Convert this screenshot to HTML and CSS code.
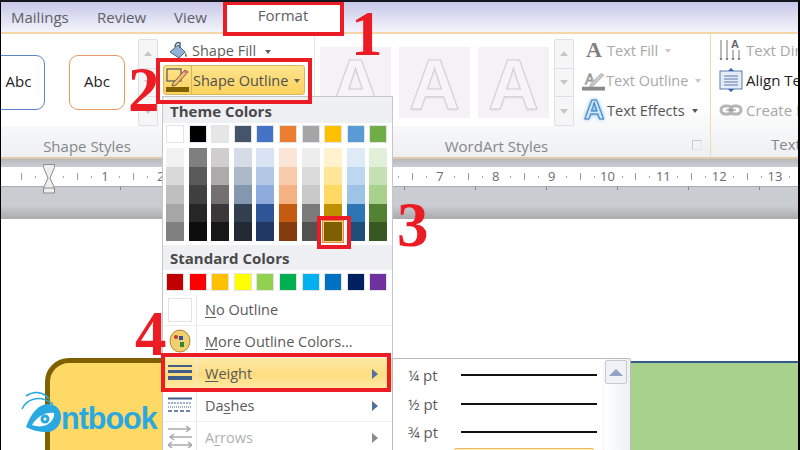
FILE: index.html
```html
<!DOCTYPE html>
<html lang="en">
<head>
    <meta charset="UTF-8">
    <title>Shape Outline</title>
    <link rel="stylesheet" href="styles.css">
</head>
<body>
<div class="screen">
    <!-- Tabs -->
    <div class="tabs">
        <span class="tab mailings">Mailings</span>
        <span class="tab review">Review</span>
        <span class="tab view">View</span>
        <span class="tab format">Format</span>
    </div>

    <!-- Ribbon -->
    <div class="ribbon">
        <div class="group shape-styles">
            <div class="group-body">
                <div class="gallery">
                    <div class="abc-box blue">Abc</div>
                    <div class="abc-box orange">Abc</div>
                </div>
                <div class="scroller">
                    <span class="up"></span><span class="down"></span><span class="more"></span>
                </div>
            </div>
            <div class="group-label">Shape Styles</div>
        </div>

        <div class="group commands">
            <div class="cmd shape-fill">
                <svg width="22" height="20" viewBox="0 0 22 20"><path d="M3 11 11 4l7 7-6 6z" fill="#8fb2d8" stroke="#48627f"/><path d="M8 6C8 2 11 1 13 2v5" fill="none" stroke="#48627f" stroke-width="1.5"/><path d="M18 11c1 2 2 3 2 4s-2 1-2 0z" fill="#6a8a3c"/><rect x="0" y="17" width="20" height="2" fill="#a9cf8e"/></svg>
                <span>Shape Fill</span><i class="caret"></i>
            </div>
            <div class="cmd shape-outline">
                <span class="pen-icon">
                    <svg width="26" height="26" viewBox="0 0 26 26"><rect x="3" y="3" width="14" height="12" fill="none" stroke="#555" stroke-width="1.2"/><path d="M9 17 21 4l3 2L12 19l-4 1z" fill="#f1c07c" stroke="#7a5a30" stroke-width="1"/><path d="M21 4l3 2-1.500 2-3-2z" fill="#e0707a"/><rect x="2" y="21" width="23" height="5" fill="#7f6000"/></svg>
                </span>
                <span>Shape Outline</span><i class="caret"></i>
            </div>
        </div>

        <div class="group wordart">
            <div class="group-body">
                <div class="art-gallery">
                    <div class="art">A</div>
                    <div class="art">A</div>
                    <div class="art">A</div>
                </div>
                <div class="scroller">
                    <span class="up"></span><span class="down"></span><span class="more"></span>
                </div>
                <div class="text-cmds">
                    <div class="cmd faded"><b class="plain-a">A</b><span>Text Fill</span><i class="caret"></i></div>
                    <div class="cmd faded">
                        <svg width="23" height="24" viewBox="0 0 24 24"><text x="3" y="16" font-family="Liberation Sans" font-size="15" fill="none" stroke="#888" stroke-width=".8">A</text><path d="M9 16 20 5l3 2-11 11-4 1z" fill="#c9c9c9" stroke="#999" stroke-width=".6"/><rect x="0" y="19" width="24" height="4" fill="#8a8a8a"/></svg>
                        <span>Text Outline</span><i class="caret"></i>
                    </div>
                    <div class="cmd dark"><b class="glow-a">A</b><span>Text Effects</span><i class="caret"></i></div>
                </div>
            </div>
            <div class="group-label wordart-label">WordArt Styles<span class="launcher"></span></div>
        </div>

        <div class="group text-group">
            <div class="cmd faded">
                <svg width="24" height="24" viewBox="0 0 24 24" fill="none" stroke="#777"><path d="M2 2v20M8 2v20M14 12v10M20 12v10"/><path d="M1 20l1 2 1-2M7 20l1 2 1-2M13 20l1 2 1-2M19 20l1 2 1-2" /><text x="12" y="10" font-family="Liberation Sans" font-weight="bold" font-size="11" fill="#666" stroke="none">A</text></svg>
                <span>Text Direction</span>
            </div>
            <div class="cmd black">
                <svg width="24" height="24" viewBox="0 0 24 24"><rect x="1" y="3" width="22" height="18" fill="#e4ecf7" stroke="#5a7aa8"/><path d="M5 8h14M5 11h14M5 14h14M5 17h14" stroke="#5a7aa8"/><path d="M12 0l3 3H9zM12 24l3-3H9z" fill="#2f5fb0"/></svg>
                <span>Align Text</span>
            </div>
            <div class="cmd faded">
                <svg width="24" height="24" viewBox="0 0 24 24" fill="none"><rect x="2" y="8" width="11" height="8" rx="4" stroke="#b5b5b5" stroke-width="3"/><rect x="11" y="8" width="11" height="8" rx="4" stroke="#b5b5b5" stroke-width="3"/><path d="M7 12h10" stroke="#8a8a8a"/></svg>
                <span>Create Link</span>
            </div>
            <div class="group-label text-label">Text</div>
        </div>
    </div>

    <!-- Ruler -->
    <div class="ruler-band">
        <div class="ruler" id="ruler">
            <svg class="marker" width="12" height="30" viewBox="0 0 12 30"><path d="M.5.5h11v3L7 14l4.500 10v5H.5v-5L5 14 .5 3.500z" fill="#eee" stroke="#8c8c8c"/><path d="M.5 24h11" stroke="#8c8c8c"/></svg>
        </div>
    </div>

    <!-- Documento -->
    <div class="doc"></div>
    <div class="yellow-shape"></div>
    <div class="green-shape"></div>

    <!-- Logo -->
    <div class="logo">
        <svg class="logo-eye" width="44" height="46" viewBox="0 0 44 46"><path d="M3 20C8 10 20 5 34 15" fill="none" stroke="#29a9e0" stroke-width="1.6"/><path d="M7 7C14 2 24 2 30 10" fill="none" stroke="#29a9e0" stroke-width="1.6"/><path d="M7 38C12 24 20 15 29 15c9 0 13 7 13 13 0 8-6 15-14 15-8 0-16-2-21-5z" fill="#29a9e0"/><path d="M13 36c5-8 13-13 22-12 1 6-5 12-11 13-4 1-8 0-11-1z" fill="#fff"/><circle cx="26" cy="30" r="4.5" fill="#29a9e0"/><circle cx="26" cy="30" r="1.5" fill="#fff"/></svg>
        <span class="logo-text">ntbook</span>
    </div>

    <!-- Menu de cores -->
    <div class="menu">
        <div class="menu-head">Theme Colors</div>
        <div class="swatch-row base">
            <i style="background: #ffffff"></i><i style="background: #000000"></i><i style="background: #e7e6e6"></i><i style="background: #44546a"></i><i style="background: #4472c4"></i><i style="background: #ed7d31"></i><i style="background: #a5a5a5"></i><i style="background: #ffc000"></i><i style="background: #5b9bd5"></i><i style="background: #70ad47"></i>
        </div>
        <div class="shades" id="shades"></div>
        <div class="menu-head standard">Standard Colors</div>
        <div class="swatch-row">
            <i style="background: #c00000"></i><i style="background: #ff0000"></i><i style="background: #ffc000"></i><i style="background: #ffff00"></i><i style="background: #92d050"></i><i style="background: #00b050"></i><i style="background: #00b0f0"></i><i style="background: #0070c0"></i><i style="background: #002060"></i><i style="background: #7030a0"></i>
        </div>
        <div class="menu-list">
            <div class="menu-item no-outline"><span class="ic"><span class="white-box"></span></span><span class="lb"><u>N</u>o Outline</span></div>
            <div class="menu-item more-colors">
                <span class="ic"><svg width="22" height="24" viewBox="0 0 22 24"><ellipse cx="11" cy="12" rx="10" ry="11" fill="#f0cf70" stroke="#b08a30"/><circle cx="7" cy="8" r="2" fill="#d03020"/><rect x="10" y="7" width="4" height="4" fill="#2a4fa0"/><rect x="11" y="13" width="4" height="5" fill="#2f8a30"/></svg></span>
                <span class="lb"><u>M</u>ore Outline Colors...</span>
            </div>
            <div class="menu-item weight">
                <span class="ic"><svg width="24" height="16" viewBox="0 0 24 16"><rect y="0" width="24" height="2" fill="#3f5f8a"/><rect y="5" width="24" height="3" fill="#3f5f8a"/><rect y="11" width="24" height="4" fill="#3f5f8a"/></svg></span>
                <span class="lb"><u>W</u>eight</span><i class="arrow"></i>
            </div>
            <div class="menu-item">
                <span class="ic"><svg width="24" height="16" viewBox="0 0 24 16" fill="none" stroke="#3f5f8a"><path d="M0 1.500h24" stroke-width="2"/><path d="M0 6h24" stroke-dasharray="2 1"/><path d="M0 10h24" stroke-dasharray="1 1"/><path d="M0 14h24" stroke-dasharray="4 2" stroke-width="1.500"/></svg></span>
                <span class="lb">Da<u>s</u>hes</span><i class="arrow"></i>
            </div>
            <div class="menu-item disabled">
                <span class="ic"><svg width="24" height="22" viewBox="0 0 24 22" fill="none" stroke="#aaa" stroke-width="1.500"><path d="M0 3h22M18 0l4 3-4 3"/><path d="M24 11H2M6 8l-4 3 4 3"/><path d="M0 19h24M4 16l-4 3 4 3M20 16l4 3-4 3"/></svg></span>
                <span class="lb">A<u>r</u>rows</span><i class="arrow"></i>
            </div>
        </div>
    </div>

    <!-- Submenu Weight -->
    <div class="submenu">
        <div class="weights">
            <div class="weight-row"><span>¼ pt</span><i class="w1"></i></div>
            <div class="weight-row"><span>½ pt</span><i class="w1"></i></div>
            <div class="weight-row"><span>¾ pt</span><i class="w2"></i></div>
            <div class="weight-next"></div>
        </div>
        <div class="sub-scroll"><span class="sub-up"></span></div>
    </div>

    <!-- Marcações em vermelho -->
    <div class="mark mark-format"></div>
    <div class="mark mark-outline"></div>
    <div class="mark mark-swatch"></div>
    <div class="mark mark-weight"></div>
    <span class="step step1">1</span>
    <span class="step step2">2</span>
    <span class="step step3">3</span>
    <span class="step step4">4</span>
</div>
<script>
    // Colunas de tons do Theme Colors
    const columns = [
        ['#f2f2f2', '#d9d9d9', '#bfbfbf', '#a6a6a6', '#808080'],
        ['#7f7f7f', '#595959', '#404040', '#262626', '#0d0d0d'],
        ['#d0cece', '#aeabab', '#757070', '#3a3838', '#171717'],
        ['#d6dce5', '#adb9ca', '#8497b0', '#323f4f', '#222a35'],
        ['#dae3f3', '#b4c7e7', '#8faadc', '#2f5597', '#1f3864'],
        ['#fbe5d6', '#f8cbad', '#f4b183', '#c55a11', '#843c0c'],
        ['#ededed', '#dbdbdb', '#c9c9c9', '#7b7b7b', '#525252'],
        ['#fff2cc', '#ffe699', '#ffd966', '#bf9000', '#7f6000'],
        ['#deebf7', '#bdd7ee', '#9dc3e6', '#2e75b6', '#1f4e79'],
        ['#e2f0d9', '#c5e0b4', '#a9d18e', '#548235', '#385723']
    ];
    const shades = document.getElementById('shades');
    columns.forEach(function(col, c) {
        const column = document.createElement('div');
        column.className = 'shade-col';
        col.forEach(function(color, r) {
            const cell = document.createElement('i');
            cell.style.background = color;
            if (c === 7 && r === 4) cell.className = 'selected'; // cor escolhida
            column.appendChild(cell);
        });
        shades.appendChild(column);
    });

    // Régua: números, traços e pontos
    const ruler = document.getElementById('ruler');
    function addMark(className, x, text) {
        const mark = document.createElement('span');
        mark.className = className;
        mark.style.left = x + 'px';
        if (text) mark.textContent = text;
        ruler.appendChild(mark);
    }
    for (let n = 0; n <= 14; n++) {
        const x = 48 + n * 55.85;
        if (n > 0) addMark('num', x, String(n));
        addMark('tick', x - 28);
        addMark('dot', x - 14);
        addMark('dot', x + 14);
    }
    for (let i = 0; i < 11; i++) {
        addMark('low-tick', 48 + i * 71);
    }
</script>
</body>
</html>
```

FILE: styles.css
```css
body {
    margin: 0;
    background: #000;
    font-family: "Open Sans", "Liberation Sans", sans-serif;
    color: #5f5f5f;
}
.screen {
    position: relative;
    width: 800px;
    height: 450px;
    overflow: hidden;
    background: #fff;
    box-sizing: border-box;
    border-top: 2px solid #15151f;
    border-left: 1px solid #000;
    border-right: 2px solid #000;
}

/* Tabs */
.tabs {
    display: flex;
    align-items: center;
    height: 30px;
    padding-left: 10px;
    box-sizing: border-box;
    background: linear-gradient(#c6c8e8, #f4f4fb);
    font-size: 15px;
    color: #5d6066;
}
.tab { display: block; }
.mailings { width: 86px; }
.review { width: 77px; }
.view { width: 49px; }
.format {
    width: 120px;
    height: 34px;
    line-height: 30px;
    text-align: center;
    background: #fff;
}

/* Ribbon */
.ribbon {
    display: flex;
    height: 127px;
    box-sizing: border-box;
    border-top: 2px solid #f5d6a8;
    border-bottom: 2px solid #dfc9a8;
    background: linear-gradient(#fff 55%, #eeeff1);
}
.group { position: relative; flex-shrink: 0; }
.group-body { display: flex; height: 88px; padding-top: 5px; }
.group-label {
    height: 24px;
    line-height: 24px;
    margin-top: 7px;
    text-align: center;
    font-size: 15px;
    color: #84878c;
}
.shape-styles { width: 158px; }
.shape-styles .group-label { padding-left: 14px; }
.gallery {
    display: flex;
    gap: 24px;
    align-items: center;
    width: 137px;
    height: 87px;
    flex-shrink: 0;
    background: #fff;
}
.abc-box {
    height: 55px;
    line-height: 51px;
    flex-shrink: 0;
    box-sizing: border-box;
    border-radius: 9px;
    text-align: center;
    font-size: 15px;
    color: #222;
    background: #fff;
}
.abc-box.blue { border: 1px solid #5b86c8; width: 62px; margin-left: -18px; padding-left: 9px; }
.abc-box.orange { border: 1px solid #e59a63; width: 56px; }
.scroller {
    display: flex;
    flex-direction: column;
    flex-shrink: 0;
    width: 20px;
    height: 87px;
    box-sizing: border-box;
    border: 1px solid #dfe0e3;
    border-radius: 2px;
    background: #f6f6f7;
}
.scroller span {
    flex: 1;
    display: flex;
    align-items: center;
    justify-content: center;
    border-bottom: 1px solid #dfe0e3;
}
.scroller span:last-child { border-bottom: 0; }
.scroller span::before {
    content: "";
    border-left: 4px solid transparent;
    border-right: 4px solid transparent;
}
.scroller .up::before { border-bottom: 5px solid #c4c6ca; }
.scroller .down::before, .scroller .more::before { border-top: 5px solid #c4c6ca; }

/* Comandos */
.cmd {
    display: flex;
    align-items: center;
    height: 30px;
    gap: 3px;
    font-size: 14.5px;
    white-space: nowrap;
}
.cmd svg { flex-shrink: 0; }
.caret {
    display: block;
    width: 0;
    margin: 2px 0 0 6px;
    border-left: 3.5px solid transparent;
    border-right: 3.5px solid transparent;
    border-top: 4px solid #5f5f5f;
}
.commands {
    width: 156px;
    padding: 2px 0 0 5px;
    box-sizing: border-box;
    border-right: 1px solid #e6e6e6;
}
.shape-fill { height: 29px; padding-left: 3px; }
.shape-outline {
    width: 142px;
    height: 30px;
    margin-left: -1px;
    gap: 0;
    box-sizing: border-box;
    border: 1px solid #d9b75f;
    border-radius: 3px;
    background: linear-gradient(#fde48d, #fdd25e);
    color: #4f4f4f;
}
.pen-icon {
    display: flex;
    width: 27px;
    height: 28px;
    margin-right: 1px;
    border-right: 1px solid #d9b75f;
}
.wordart { width: 395px; }
.art-gallery {
    display: flex;
    gap: 8px;
    flex-shrink: 0;
    width: 239px;
    height: 87px;
    box-sizing: border-box;
    padding: 8px 5px;
    background: #fff;
}
.art {
    width: 71px;
    height: 71px;
    text-align: center;
    font: bold 70px/76px "Liberation Sans", sans-serif;
    color: #f7f3f8;
    background: #f5f1f6;
    -webkit-text-stroke: 1px #cfcfcf;
    text-shadow: 0 1px 2px #d8d8d8;
    filter: blur(0.5px);
}
.text-cmds { margin-top: -4px; padding-left: 8px; color: #a8a8a8; }
.text-cmds .cmd { gap: 1px; }
.faded { color: #a8a8a8; }
.faded .caret { border-top-color: #c8c8c8; }
.dark { color: #555; }
.dark .caret { border-top-color: #555; }
.black { color: #222; }
.plain-a, .glow-a {
    display: block;
    width: 24px;
    text-align: center;
    font: bold 22px "Liberation Serif", serif;
    color: #808080;
}
.glow-a {
    font: bold 28px "Liberation Sans", sans-serif;
    color: #cfe8f8;
    text-shadow: 0 0 4px #43a6e8;
    -webkit-text-stroke: 1px #3a7ec0;
}
.wordart-label { position: relative; padding-right: 32px; }
.launcher {
    position: absolute;
    right: 8px;
    top: 6px;
    width: 8px;
    height: 8px;
    border-top: 1px solid #c8c8c8;
    border-left: 1px solid #c8c8c8;
    border-right: 1px solid #e4e4e4;
    border-bottom: 1px solid #e4e4e4;
}
.text-group {
    flex: 1;
    min-width: 0;
    padding: 1px 0 0 8px;
    border-left: 1px solid #f0d9b5;
    overflow: hidden;
}
.text-group .cmd { gap: 3px; font-size: 15px; }
.text-label {
    position: absolute;
    left: 60px;
    bottom: 1px;
    margin: 0;
}

/* Régua */
.ruler-band {
    position: relative;
    height: 60px;
    padding-top: 8px;
    box-sizing: border-box;
    background: linear-gradient(#b6b8bc, #c9ccd0 12%, #c9ccd0 78%, #a9aaac);
}
.ruler {
    position: relative;
    height: 19px;
    background: #fff;
    border-bottom: 1px solid #a9acb0;
    font-size: 13px;
    color: #6d6d6d;
}
.num { position: absolute; top: 0; transform: translateX(-50%); line-height: 19px; }
.tick {
    position: absolute;
    top: 6px;
    width: 1px;
    height: 7px;
    background: #9a9a9a;
}
.dot {
    position: absolute;
    top: 9px;
    width: 1px;
    height: 2px;
    background: #a8a8a8;
}
.low-tick {
    position: absolute;
    top: 20px;
    width: 1px;
    height: 3px;
    background: #85888c;
}
.marker { position: absolute; left: 42px; top: -3px; z-index: 1; }

/* Documento */
.doc { height: 231px; background: #fff; }
.yellow-shape {
    position: absolute;
    left: 44px;
    top: 356px;
    width: 160px;
    height: 120px;
    box-sizing: border-box;
    border: 5px solid #7f6000;
    border-radius: 24px;
    background: #ffd966;
}
.green-shape {
    position: absolute;
    left: 629px;
    top: 359px;
    width: 180px;
    height: 100px;
    background: #a9d18e;
    border-top: 2px solid #2f5a8a;
}
.logo {
    position: absolute;
    left: 18px;
    top: 385px;
    display: flex;
    align-items: center;
}
.logo-eye { margin-right: -2px; }
.logo-text {
    font: bold 30.5px "Liberation Sans", sans-serif;
    letter-spacing: -1px;
    color: #29a9e0;
    margin-top: 12px;
    line-height: 38px;
}

/* Menu */
.menu {
    position: absolute;
    left: 161px;
    top: 94px;
    width: 231px;
    height: 360px;
    box-sizing: border-box;
    border: 1px solid #c4c6ca;
    background: #fff;
    font-size: 14.5px;
}
.menu-head {
    height: 26px;
    line-height: 28px;
    padding-left: 7px;
    background: #eef0f4;
    font-weight: bold;
    font-size: 15px;
    color: #4a4a4a;
}
.menu-head.standard { height: 25px; margin-top: 4px; line-height: 26px; }
.swatch-row {
    display: flex;
    gap: 4.6px;
    padding: 3px 3px 0;
    height: 20px;
}
.swatch-row i {
    display: block;
    width: 18px;
    height: 18px;
    box-sizing: border-box;
    border: 1px solid #e3e4e7;
}
.swatch-row.base { height: 21px; padding-top: 2px; }
.shades {
    display: flex;
    gap: 4.6px;
    padding: 0 3px;
    margin-top: 2px;
}
.shade-col { display: flex; flex-direction: column; }
.shade-col i { display: block; width: 18px; height: 18.6px; }
.shade-col i.selected { box-shadow: 0 0 0 1px #f8cb7e, 0 0 0 2px #e8883a; position: relative; }
.menu-list { margin-top: 2px; }
.menu-item {
    position: relative;
    display: flex;
    align-items: center;
    height: 32px;
    border-bottom: 1px solid #eee;
    box-sizing: border-box;
    color: #5a5a5a;
}
.no-outline { height: 31px; }
.ic {
    display: flex;
    align-items: center;
    justify-content: center;
    width: 34px;
    height: 100%;
    box-sizing: border-box;
    border-right: 1px solid #e8e8e8;
    margin-right: 8px;
    flex-shrink: 0;
}
.white-box { width: 22px; height: 22px; border: 1px solid #e3e3e3; }
.lb u { text-underline-offset: 2px; }
.arrow {
    position: absolute;
    right: 14px;
    top: 11px;
    border-top: 5px solid transparent;
    border-bottom: 5px solid transparent;
    border-left: 6px solid #4f6fa0;
}
.weight { background: linear-gradient(#fde9a5, #fddd80 55%, #feeaa8); }
.disabled { color: #b0b0b0; }
.disabled .arrow { border-left-color: #8a8a8a; }

/* Submenu */
.submenu {
    position: absolute;
    left: 391px;
    top: 356px;
    width: 239px;
    height: 100px;
    display: flex;
    box-sizing: border-box;
    border: 1px solid #b9babd;
    border-radius: 2px 2px 0 0;
    background: #fff;
}
.weights { flex: 1; padding-top: 2px; }
.weight-row {
    display: flex;
    align-items: center;
    height: 28.5px;
    padding-left: 15px;
    font-size: 15px;
    color: #5a5a5a;
}
.weight-row span { width: 53px; }
.weight-row i { display: block; width: 136px; background: #111; }
.w1 { height: 2px; }
.w2 { height: 2px; }
.weight-next {
    height: 10px;
    margin: 1px 9px 0 61px;
    border: 1px solid #f0b860;
    border-radius: 2px;
    background: #fdeec0;
}
.sub-scroll {
    width: 24px;
    background: linear-gradient(90deg, #fff, #eef0f4);
    padding: 1px;
    border-left: 1px solid #f5f5f5;
}
.sub-up {
    display: flex;
    align-items: center;
    justify-content: center;
    width: 22px;
    height: 24px;
    box-sizing: border-box;
    border: 1px solid #c5c9cf;
    border-radius: 2px;
    background: #f0f1f4;
}
.sub-up::before {
    content: "";
    border-left: 7px solid transparent;
    border-right: 7px solid transparent;
    border-bottom: 7px solid #93a3c5;
}

/* Marcações */
.mark {
    position: absolute;
    box-sizing: border-box;
    border: 4px solid #ec1c24;
}
.mark-format { left: 222px; top: -1px; width: 121px; height: 35px; }
.mark-outline { left: 155px; top: 56px; width: 156px; height: 46px; }
.mark-swatch { left: 316px; top: 214px; width: 34px; height: 33px; }
.mark-weight { left: 160px; top: 351px; width: 230px; height: 39px; }
.step {
    position: absolute;
    font: bold 63px/60px "Liberation Serif", serif;
    color: #ec1c24;
}
.step1 { left: 350px; top: 2px; }
.step2 { left: 127px; top: 58px; }
.step3 { left: 396px; top: 193px; }
.step4 { left: 134px; top: 302px; }
```
